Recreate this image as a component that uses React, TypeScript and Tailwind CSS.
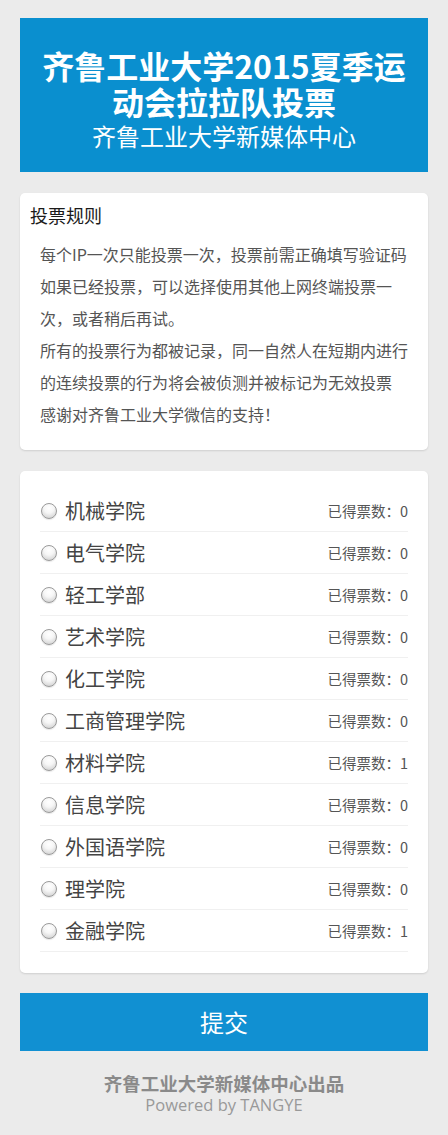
import React from "react";

const colleges: [string, number][] = [
  ["机械学院", 0],
  ["电气学院", 0],
  ["轻工学部", 0],
  ["艺术学院", 0],
  ["化工学院", 0],
  ["工商管理学院", 0],
  ["材料学院", 1],
  ["信息学院", 0],
  ["外国语学院", 0],
  ["理学院", 0],
  ["金融学院", 1],
];

const rules = [
  "每个IP一次只能投票一次，投票前需正确填写验证码",
  "如果已经投票，可以选择使用其他上网终端投票一",
  "次，或者稍后再试。",
  "所有的投票行为都被记录，同一自然人在短期内进行",
  "的连续投票的行为将会被侦测并被标记为无效投票",
  "感谢对齐鲁工业大学微信的支持！",
];

export default function App() {
  return (
    <div
      className="min-h-[1135px] bg-[#ebebeb] px-5 pt-[18px] pb-5"
      style={{ fontFamily: '"Noto Sans CJK SC", "Noto Sans", sans-serif' }}
    >
      <div className="bg-[#0a8fcf] text-white text-center pt-[29px] pb-[20px]">
        <div className="text-[32px] font-bold leading-[36px] whitespace-nowrap">
          <div>齐鲁工业大学2015夏季运</div>
          <div>动会拉拉队投票</div>
        </div>
        <div className="text-[24px] leading-[32px] mt-[1px]">齐鲁工业大学新媒体中心</div>
      </div>

      <div className="mt-[21px] bg-white rounded-[5px] shadow-[0_1px_2px_rgba(0,0,0,0.12)] pt-[10px] pb-[20px] px-[10px]">
        <div className="text-[18px] leading-[24px] text-[#1a1a1a]">投票规则</div>
        <div className="mt-[11px] pl-[10px] text-[16px] leading-[32px] text-[#555]">
          {rules.map((r, i) => (
            <div key={i} className="whitespace-nowrap">
              {r}
            </div>
          ))}
        </div>
      </div>

      <div className="mt-[21px] bg-white rounded-[5px] shadow-[0_1px_2px_rgba(0,0,0,0.12)] pt-[19px] pb-[21px] px-5">
        {colleges.map(([name, n]) => (
          <div
            key={name}
            className="flex items-center justify-between h-[42px] border-b border-[#f0f0f0]"
          >
            <div className="flex items-center">
              <span className="ml-[1px] w-[16px] h-[16px] rounded-full border border-[#9a9a9a] bg-[radial-gradient(circle_at_50%_30%,#ffffff_0%,#f6f6f6_40%,#c8c8c8_100%)] shadow-[0_1px_1px_rgba(0,0,0,0.1)]" />
              <span className="ml-[8px] text-[20px] text-[#444] leading-[28px]">{name}</span>
            </div>
            <span className="text-[14.5px] text-[#555]">已得票数：{n}</span>
          </div>
        ))}
      </div>

      <button className="mt-[20px] w-full h-[58px] bg-[#1190d2] text-white text-[24px] flex items-center justify-center">
        提交
      </button>

      <div className="mt-[20px] text-center">
        <div className="text-[18.5px] font-bold text-[#8a8a8a] leading-[24px]">齐鲁工业大学新媒体中心出品</div>
        <div className="text-[16.5px] text-[#999] leading-[20px]" style={{ fontFamily: '"Open Sans", "Noto Sans", sans-serif' }}>
          Powered by TANGYE
        </div>
      </div>
    </div>
  );
}
